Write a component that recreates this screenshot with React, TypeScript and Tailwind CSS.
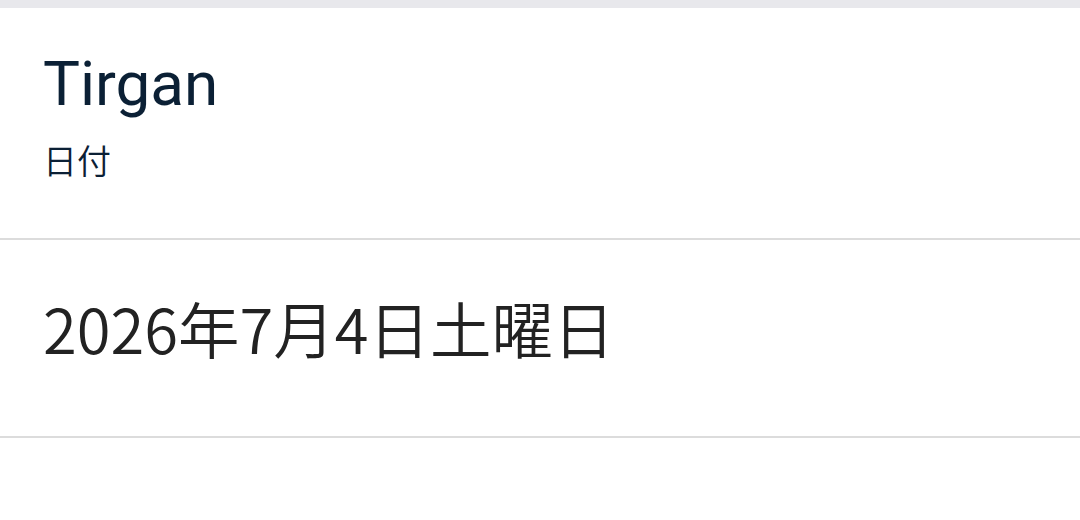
export default function App() {
  return (
    <div className="h-[520px] w-[1080px] overflow-hidden bg-white">
      {/* status strip */}
      <div className="h-2 bg-[#e8e8ec]" />

      {/* header */}
      <div className="h-[232px] border-b-2 border-[#dcdcdc] pl-[43px] pt-[45px]">
        <div className="font-['Roboto',sans-serif] text-[62px] leading-none text-[#0b2035]">
          Tirgan
        </div>
        <div className="mt-[28px] font-['Noto_Sans_CJK_JP',sans-serif] text-[34px] font-[350] leading-none text-[#0b2035]">
          日付
        </div>
      </div>

      {/* value row */}
      <div className="h-[198px] border-b-2 border-[#dcdcdc] pl-[43px] pt-[57px]">
        <div className="font-['Noto_Sans_CJK_JP',sans-serif] text-[61.5px] font-[350] leading-none text-[#222222]">
          2026年7月4日土曜日
        </div>
      </div>
    </div>
  );
}
